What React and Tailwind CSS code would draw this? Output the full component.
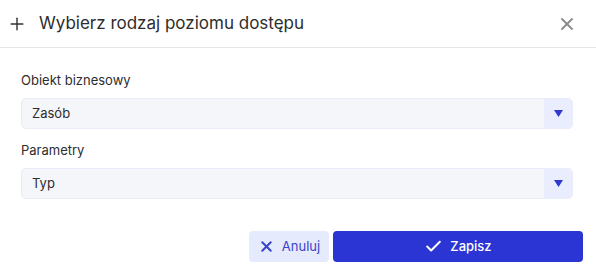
import { Plus, X, Check } from 'lucide-react';

function Select({ label, value }) {
  return (
    <div className="flex flex-col">
      <label className="text-[13px] text-[#2d2d2d] leading-4 mb-[10px]">{label}</label>
      <div className="flex h-[31px] rounded-[5px] border border-[#e8ebf8] bg-[#f5f6fa] overflow-hidden">
        <div className="flex-1 flex items-center pl-[10px] text-[13px] text-[#2d2d2d]">{value}</div>
        <div className="w-[28px] flex items-center justify-center bg-[#e9edfd]">
          <svg width="9" height="7" viewBox="0 0 9 7">
            <path d="M0 0 H9 L4.5 7 Z" fill="#2f38cf" />
          </svg>
        </div>
      </div>
    </div>
  );
}

export default function App() {
  return (
    <div className="w-[596px] h-[274px] bg-white font-['Inter',sans-serif] text-[#2d2d2d]">
      <div className="h-[48px] flex items-center border-b border-[#e3e5ea] pl-[7px] pr-[19px]">
        <Plus size={20} strokeWidth={1.7} className="text-[#333]" />
        <h1 className="ml-[12px] text-[17px] text-[#2d2d2d] leading-none">Wybierz rodzaj poziomu dostępu</h1>
        <X size={20} strokeWidth={2.2} className="ml-auto text-[#8a8a8a]" />
      </div>
      <div className="pl-[21px] pr-[23px] pt-[24px] flex flex-col gap-[13px]">
        <Select label="Obiekt biznesowy" value="Zasób" />
        <Select label="Parametry" value="Typ" />
      </div>
      <div className="flex justify-end gap-[4px] pr-[13px] mt-[32px]">
        <button className="w-[80px] h-[31px] rounded-[4px] bg-[#e6eafd] text-[#3a43c9] text-[13px] flex items-center justify-center gap-[7px]">
          <X size={17} strokeWidth={2.8} />
          Anuluj
        </button>
        <button className="w-[250px] h-[31px] rounded-[4px] bg-[#2b35d3] text-white text-[13px] font-medium flex items-center justify-center gap-[7px]">
          <Check size={19} strokeWidth={2.5} />
          Zapisz
        </button>
      </div>
    </div>
  );
}
